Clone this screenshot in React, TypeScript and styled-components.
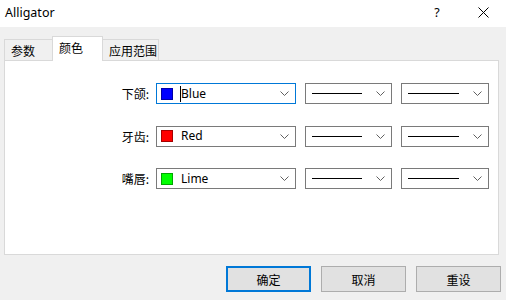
import React from 'react'
import styled, { createGlobalStyle, css } from 'styled-components'

const GlobalStyle = createGlobalStyle`
  html, body {
    margin: 0;
    padding: 0;
    background: #f0f0f0;
  }
  body {
    font-family: "Segoe UI", "Noto Sans", "Noto Sans CJK SC", sans-serif;
    font-size: 12px;
    color: #000;
  }
`

const Window = styled.div`
  width: 506px;
  height: 300px;
  background: #f0f0f0;
  display: flex;
  flex-direction: column;
  overflow: hidden;
`

const TitleBar = styled.div`
  height: 27px;
  background: #fff;
  display: flex;
  align-items: center;
  padding-left: 5px;
  font-size: 12.5px;
`

const Title = styled.div`
  flex: 1;
  margin-top: -3px;
`

const TitleButton = styled.div`
  width: 46px;
  height: 27px;
  display: flex;
  align-items: center;
  justify-content: center;
  margin-top: -3px;
`

const TabStrip = styled.div`
  margin: 9px 0 0 4px;
  height: 24px;
  display: flex;
  align-items: flex-end;
  position: relative;
  z-index: 1;
`

const Tab = styled.div<{ $active?: boolean; $w: number }>`
  width: ${p => p.$w}px;
  height: 21px;
  padding-left: 6px;
  display: flex;
  align-items: center;
  border: 1px solid #d9d9d9;
  border-bottom: none;
  background: #f0f0f0;
  font-family: "Noto Sans CJK SC", sans-serif;
  box-sizing: border-box;
  & + & {
    margin-left: -1px;
  }
  ${p =>
    p.$active &&
    css`
      height: 25px;
      margin-bottom: -1px;
      background: #fff;
      padding-bottom: 4px;
    `}
`

const Panel = styled.div`
  margin-left: 4px;
  width: 495px;
  height: 195px;
  box-sizing: border-box;
  border: 1px solid #d9d9d9;
  background: #fff;
  padding-top: 22px;
  display: flex;
  flex-direction: column;
  gap: 21.5px;
`

const Row = styled.div`
  display: flex;
  align-items: center;
  height: 21px;
`

const Label = styled.div`
  width: 144px;
  margin-right: 7px;
  text-align: right;
  font-family: "Noto Sans CJK SC", sans-serif;
`

const Combo = styled.div<{ $w: number; $focused?: boolean }>`
  width: ${p => p.$w}px;
  height: 21px;
  box-sizing: border-box;
  border: 1px solid ${p => (p.$focused ? '#0078d7' : '#7a7a7a')};
  background: #fff;
  display: flex;
  align-items: center;
  margin-right: 9px;
`

const Swatch = styled.span<{ $color: string }>`
  width: 12px;
  height: 12px;
  box-sizing: border-box;
  background: ${p => p.$color};
  border: 1px solid rgba(0, 0, 0, 0.35);
  margin: 0 8px 0 4px;
`

const ComboText = styled.span<{ $caret?: boolean }>`
  flex: 1;
  line-height: 16px;
  ${p =>
    p.$caret &&
    css`
      border-left: 1px solid #000;
      margin-left: -1px;
    `}
`

const LineSample = styled.span`
  flex: 1;
  margin: 0 14px 0 6px;
  height: 1px;
  background: #000;
`

const Chevron = styled.svg`
  width: 9px;
  height: 5px;
  margin-right: 6px;
  flex: none;
`

const Footer = styled.div`
  display: flex;
  justify-content: flex-end;
  gap: 10px;
  padding: 11px 5px 0 0;
`

const Button = styled.button<{ $primary?: boolean }>`
  width: 85px;
  height: 26px;
  box-sizing: border-box;
  background: #e1e1e1;
  border: 1px solid #adadad;
  font-family: "Noto Sans CJK SC", sans-serif;
  font-size: 12px;
  color: #000;
  padding: 0;
  ${p =>
    p.$primary &&
    css`
      border: 2px solid #0078d7;
    `}
`

const Arrow = () => (
  <Chevron viewBox="0 0 9 5">
    <path d="M0.5 0.5 L4.5 4.5 L8.5 0.5" fill="none" stroke="#606060" strokeWidth="1" />
  </Chevron>
)

const rows = [
  { label: '下颌:', color: '#0000ff', name: 'Blue', focused: true },
  { label: '牙齿:', color: '#ff0000', name: 'Red' },
  { label: '嘴唇:', color: '#00ff00', name: 'Lime' },
]

const App = () => {
  return (
    <>
      <GlobalStyle />
      <Window>
        <TitleBar>
          <Title>Alligator</Title>
          <TitleButton>?</TitleButton>
          <TitleButton>
            <svg width="11" height="11" viewBox="0 0 11 11">
              <path d="M0.5 0.5 L10.5 10.5 M10.5 0.5 L0.5 10.5" stroke="#000" strokeWidth="1" />
            </svg>
          </TitleButton>
        </TitleBar>
        <TabStrip>
          <Tab $w={49}>参数</Tab>
          <Tab $w={51} $active>颜色</Tab>
          <Tab $w={57}>应用范围</Tab>
        </TabStrip>
        <Panel>
          {rows.map(r => (
            <Row key={r.name}>
              <Label>{r.label}</Label>
              <Combo $w={140} $focused={r.focused}>
                <Swatch $color={r.color} />
                <ComboText $caret={r.focused}>{r.name}</ComboText>
                <Arrow />
              </Combo>
              <Combo $w={87}>
                <LineSample />
                <Arrow />
              </Combo>
              <Combo $w={88}>
                <LineSample />
                <Arrow />
              </Combo>
            </Row>
          ))}
        </Panel>
        <Footer>
          <Button $primary>确定</Button>
          <Button>取消</Button>
          <Button>重设</Button>
        </Footer>
      </Window>
    </>
  )
}

export default App
